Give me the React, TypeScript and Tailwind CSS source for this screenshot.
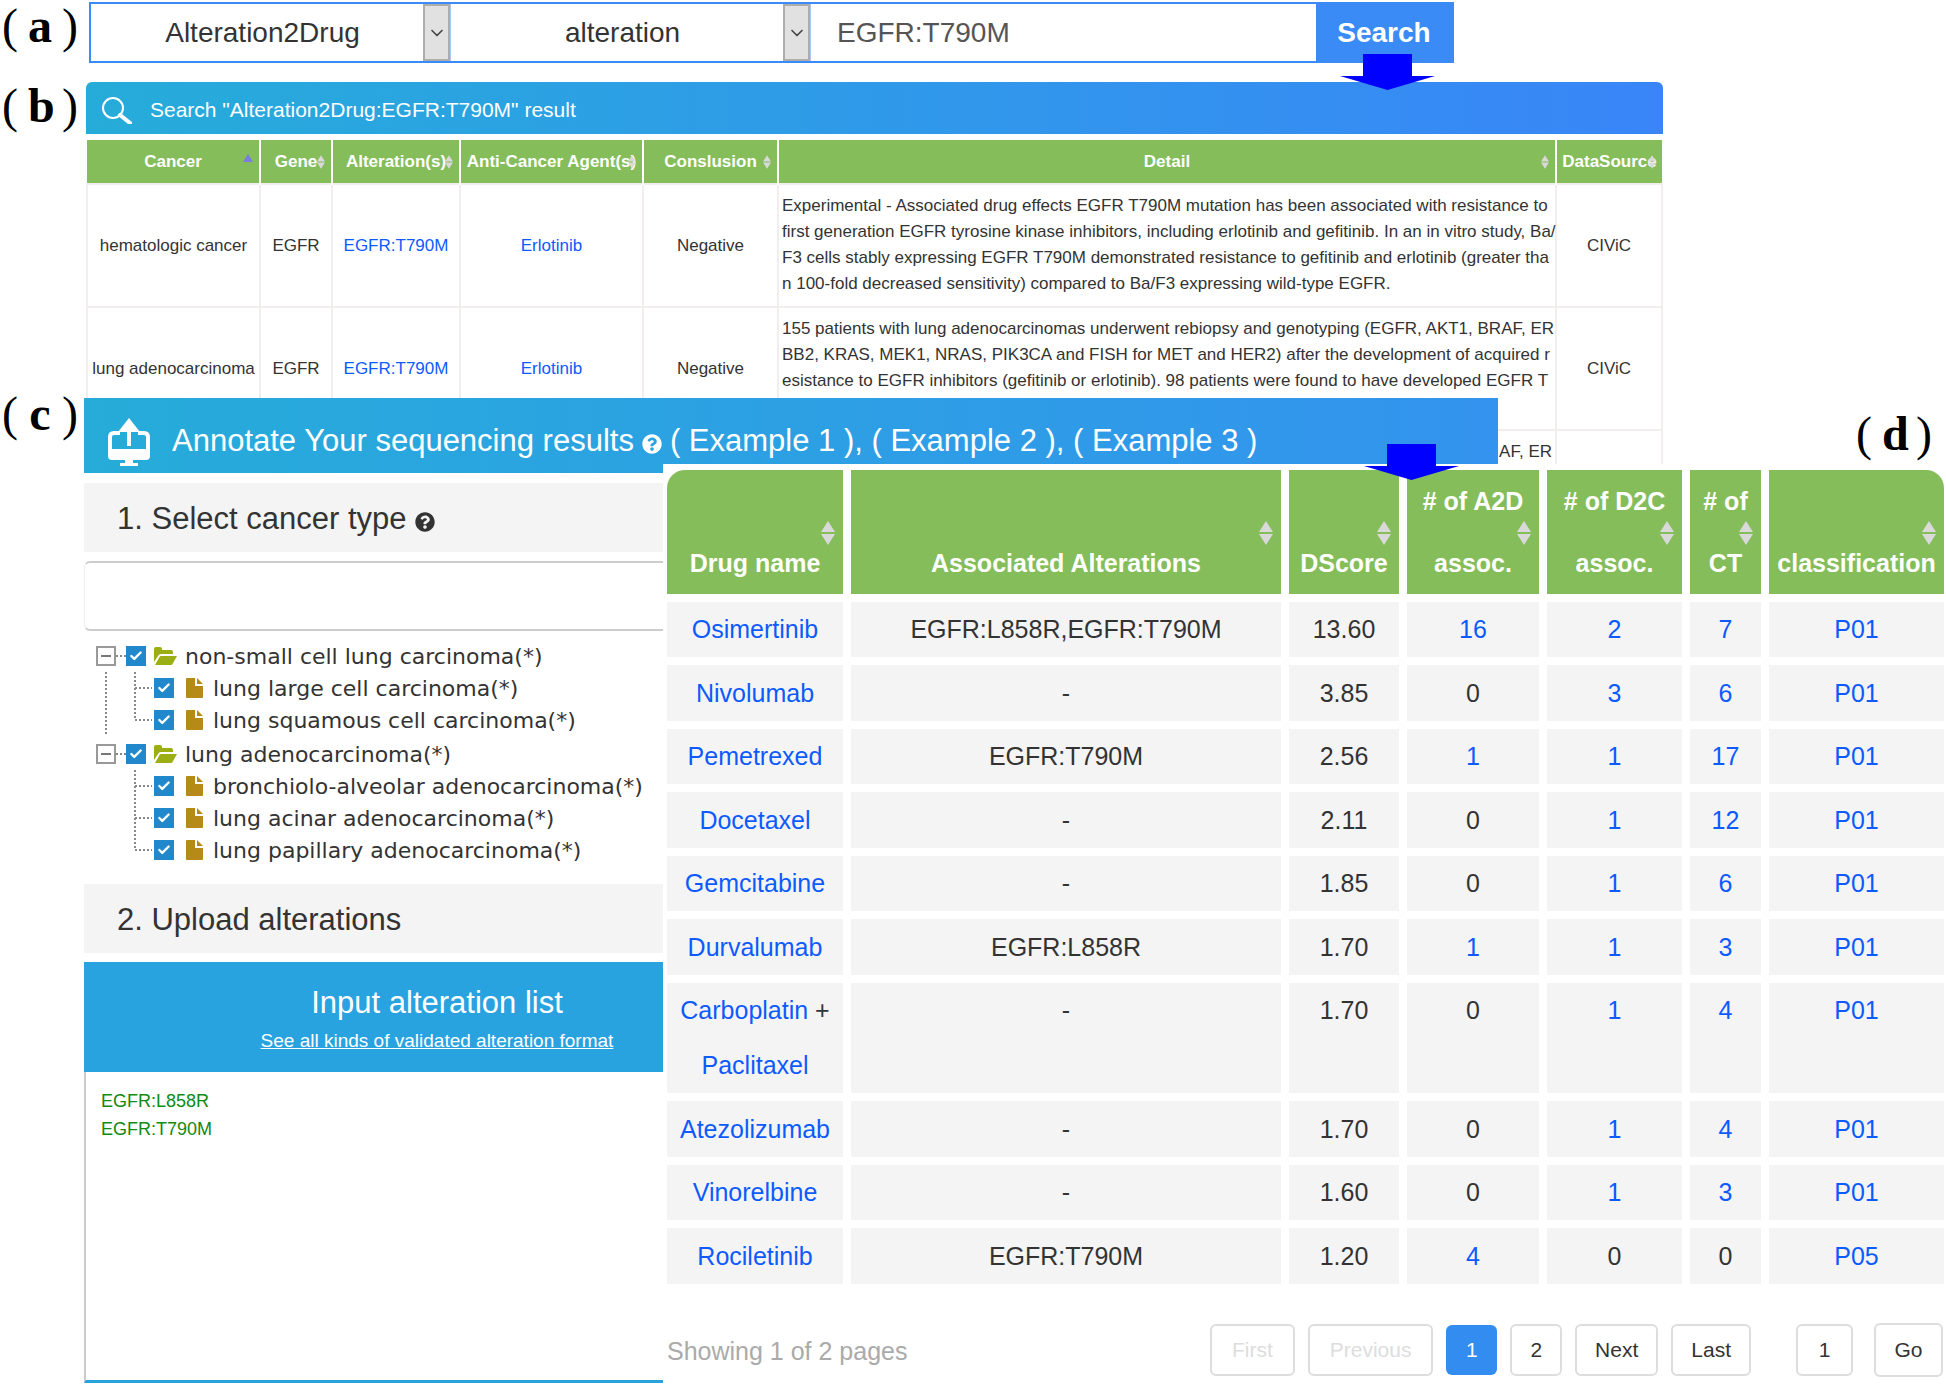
import { FaQuestionCircle } from "react-icons/fa";
import { Check, ChevronDown } from "lucide-react";

const evidence = [
  {
    cancer: "hematologic cancer",
    lines: [
      "Experimental - Associated drug effects EGFR T790M mutation has been associated with resistance to",
      "first generation EGFR tyrosine kinase inhibitors, including erlotinib and gefitinib. In an in vitro study, Ba/",
      "F3 cells stably expressing EGFR T790M demonstrated resistance to gefitinib and erlotinib (greater tha",
      "n 100-fold decreased sensitivity) compared to Ba/F3 expressing wild-type EGFR.",
    ],
  },
  {
    cancer: "lung adenocarcinoma",
    lines: [
      "155 patients with lung adenocarcinomas underwent rebiopsy and genotyping (EGFR, AKT1, BRAF, ER",
      "BB2, KRAS, MEK1, NRAS, PIK3CA and FISH for MET and HER2) after the development of acquired r",
      "esistance to EGFR inhibitors (gefitinib or erlotinib). 98 patients were found to have developed EGFR T",
    ],
  },
];

const evidenceColumns = [
  { title: "Cancer", width: "w-[173px]" },
  { title: "Gene", width: "w-[72px]" },
  { title: "Alteration(s)", width: "w-[128px]" },
  { title: "Anti-Cancer Agent(s)", width: "w-[183px]" },
  { title: "Conslusion", width: "w-[135px]" },
  { title: "Detail", width: "" },
  { title: "DataSource", width: "w-[106px]" },
];

const tree = [
  {
    name: "non-small cell lung carcinoma(*)",
    children: ["lung large cell carcinoma(*)", "lung squamous cell carcinoma(*)"],
  },
  {
    name: "lung adenocarcinoma(*)",
    children: [
      "bronchiolo-alveolar adenocarcinoma(*)",
      "lung acinar adenocarcinoma(*)",
      "lung papillary adenocarcinoma(*)",
    ],
  },
];

const drugColumns = [
  { title: "Drug name", width: "w-[176px]" },
  { title: "Associated Alterations", width: "" },
  { title: "DScore", width: "w-[110px]" },
  { title: "# of A2D assoc.", width: "w-[132px]" },
  { title: "# of D2C assoc.", width: "w-[135px]" },
  { title: "# of CT", width: "w-[71px]" },
  { title: "classification", width: "w-[175px]" },
];

const drugs = [
  { names: ["Osimertinib"], alt: "EGFR:L858R,EGFR:T790M", score: "13.60", a2d: 16, d2c: 2, ct: 7, cls: "P01" },
  { names: ["Nivolumab"], alt: "-", score: "3.85", a2d: 0, d2c: 3, ct: 6, cls: "P01" },
  { names: ["Pemetrexed"], alt: "EGFR:T790M", score: "2.56", a2d: 1, d2c: 1, ct: 17, cls: "P01" },
  { names: ["Docetaxel"], alt: "-", score: "2.11", a2d: 0, d2c: 1, ct: 12, cls: "P01" },
  { names: ["Gemcitabine"], alt: "-", score: "1.85", a2d: 0, d2c: 1, ct: 6, cls: "P01" },
  { names: ["Durvalumab"], alt: "EGFR:L858R", score: "1.70", a2d: 1, d2c: 1, ct: 3, cls: "P01" },
  { names: ["Carboplatin", "Paclitaxel"], alt: "-", score: "1.70", a2d: 0, d2c: 1, ct: 4, cls: "P01" },
  { names: ["Atezolizumab"], alt: "-", score: "1.70", a2d: 0, d2c: 1, ct: 4, cls: "P01" },
  { names: ["Vinorelbine"], alt: "-", score: "1.60", a2d: 0, d2c: 1, ct: 3, cls: "P01" },
  { names: ["Rociletinib"], alt: "EGFR:T790M", score: "1.20", a2d: 4, d2c: 0, ct: 0, cls: "P05" },
];

function PanelLabel({ letter }: { letter: string }) {
  return (
    <div className="flex w-[84px] shrink-0 gap-2.5 pl-0.5 font-['Liberation_Serif',serif] text-5xl leading-[48px] text-black">
      <span>(</span>
      <span className="w-6 text-center font-bold">{letter}</span>
      <span>)</span>
    </div>
  );
}

function DownArrow() {
  return (
    <svg className="h-9 w-[95px]" viewBox="0 0 95 36" fill="#0000ff">
      <path d="M23 0H72V22H95L47.5 36L0 22H23Z" />
    </svg>
  );
}

function SortIcon({ className }: { className: string }) {
  return (
    <svg className={className} viewBox="0 0 14 24" fill="#d9d9d9">
      <path d="M7 0L14 11H0Z" />
      <path d="M7 24L0 13H14Z" />
    </svg>
  );
}

function FolderIcon() {
  return (
    <svg className="mx-2 h-[18px] w-[23px] shrink-0" viewBox="0 0 23 18" fill="#9bae13">
      <path d="M0 15V2Q0 0 2 0H6Q8 0 8 2V3H17Q19 3 19 5V7H7Q5 7 4 9Z" />
      <path d="M1 18L5.5 10Q6 9 7 9H23L18.5 17Q18 18 17 18Z" />
    </svg>
  );
}

function FileIcon() {
  return (
    <svg className="ml-3 mr-2.5 h-5 w-[17px] shrink-0" viewBox="0 0 17 20" fill="#b58a16">
      <path d="M0 1Q0 0 1 0H9V8H17V19Q17 20 16 20H1Q0 20 0 19Z" />
      <path d="M11 0L17 6H11Z" />
    </svg>
  );
}

function Select({ label, value }: { label: string; value: string }) {
  return (
    <div className="relative h-full w-[360px] shrink-0 border-r border-[#a9c9f5]">
      <select
        aria-label={label}
        defaultValue={value}
        className="h-full w-full appearance-none bg-white pr-4 text-center text-[28px] text-[#333] outline-none"
      >
        <option>{value}</option>
      </select>
      <span className="pointer-events-none absolute inset-y-0 right-0 flex w-[27px] items-center justify-center border-2 border-[#adadad] bg-[#e1e1e1]">
        <ChevronDown className="size-5 text-[#444]" strokeWidth={2} />
      </span>
    </div>
  );
}

function SearchBar() {
  return (
    <section className="flex pt-0.5">
      <PanelLabel letter="a" />
      <form className="ml-[5px] mr-[492px] flex h-[61px] flex-1 border-2 border-[#3a8bf6]">
        <Select label="Search type" value="Alteration2Drug" />
        <Select label="Field" value="alteration" />
        <input
          aria-label="Keyword"
          defaultValue="EGFR:T790M"
          className="min-w-0 flex-1 px-[26px] text-[28px] text-[#555] outline-none"
        />
        <div className="relative w-[136px] shrink-0">
          <button type="button" className="h-full w-full bg-[#3a8bf6] text-[28px] font-bold text-white">
            Search
          </button>
          <div className="absolute left-6 top-[50px] z-10">
            <DownArrow />
          </div>
        </div>
      </form>
    </section>
  );
}

function ResultPanel() {
  return (
    <section className="mt-[19px] flex">
      <PanelLabel letter="b" />
      <div className="ml-0.5 mr-[283px] h-[382px] min-w-0 flex-1 overflow-hidden">
        <div className="flex h-[52px] items-center gap-[18px] rounded-t-md bg-linear-to-r from-[#26acd9] to-[#3985f8] pl-4 pt-1 text-[21px] text-white">
          <svg className="h-7 w-[30px]" viewBox="0 0 30 28" fill="none" stroke="currentColor">
            <circle cx="11" cy="12" r="10" strokeWidth="2" />
            <path d="M18 19L28 27" strokeWidth="4" strokeLinecap="round" />
          </svg>
          <h2>Search "Alteration2Drug:EGFR:T790M" result</h2>
        </div>
        <table className="mt-1.5 w-full table-fixed border-collapse whitespace-nowrap text-center text-[17px] leading-[26px] text-[#333]">
          <thead>
            <tr className="h-11 bg-[#84bd5a] text-white">
              {evidenceColumns.map((c) => (
                <th
                  key={c.title}
                  className={`relative border-r-2 border-white p-0 font-bold last:border-r-0 ${c.width}`}
                >
                  {c.title}
                  {c.title === "Cancer" ? (
                    <svg className="absolute right-1.5 top-3.5 h-2 w-2.5" viewBox="0 0 10 8" fill="#7b7be0">
                      <path d="M5 0L10 8H0Z" />
                    </svg>
                  ) : (
                    <SortIcon className="absolute right-1.5 top-3.5 h-4 w-2" />
                  )}
                </th>
              ))}
            </tr>
          </thead>
          <tbody>
            {evidence.map((row) => (
              <tr key={row.cancer} className="h-[123px] *:border-2 *:border-[#f3eeee] *:p-0">
                <td>{row.cancer}</td>
                <td>EGFR</td>
                <td>
                  <a href="#" className="text-[#0d5bff]">EGFR:T790M</a>
                </td>
                <td>
                  <a href="#" className="text-[#0d5bff]">Erlotinib</a>
                </td>
                <td>Negative</td>
                <td className="text-left align-top">
                  <div className="px-[3px] py-2">
                    {row.lines.map((line) => (
                      <p key={line}>{line}</p>
                    ))}
                  </div>
                </td>
                <td>CIViC</td>
              </tr>
            ))}
            {/* Next record, only its first line shows past the annotate banner */}
            <tr className="h-[123px] *:border-2 *:border-[#f3eeee] *:p-0">
              <td colSpan={5} />
              <td className="px-[3px] py-2 text-right align-top">
                <p className="px-[3px] py-2">AF, ER</p>
              </td>
              <td />
            </tr>
          </tbody>
        </table>
      </div>
    </section>
  );
}

function TreeCheckbox({ id }: { id: string }) {
  return (
    <span className="relative size-5 shrink-0">
      <input id={id} type="checkbox" defaultChecked className="block size-5 appearance-none bg-[#2189cb]" />
      <Check className="pointer-events-none absolute left-[3px] top-[3px] size-3.5 text-white" strokeWidth={4} />
    </span>
  );
}

function CancerTree() {
  return (
    <ul className="mt-[9px] flex flex-col gap-0.5 whitespace-nowrap pl-3 font-['DejaVu_Sans',sans-serif] text-[22px] text-[#333]">
      {tree.map((group, g) => (
        <li key={group.name}>
          <div className="flex h-8 items-center">
            <button
              type="button"
              aria-label="Collapse"
              className="flex size-5 items-center justify-center border-2 border-[#999]"
            >
              <span className="h-0.5 w-2.5 bg-[#777]" />
            </button>
            <span className="w-2.5 border-t-2 border-dotted border-[#888]" />
            <TreeCheckbox id={group.name} />
            <FolderIcon />
            <label htmlFor={group.name}>{group.name}</label>
          </div>
          <ul>
            {group.children.map((name, i) => (
              <li key={name} className="flex h-8 items-center">
                <svg
                  className="h-8 w-14 shrink-0"
                  viewBox="0 0 56 32"
                  fill="none"
                  stroke="#888"
                  strokeWidth="2"
                  strokeDasharray="2 2"
                >
                  {g === 0 && <path d="M10 0V32" />}
                  <path d={i === group.children.length - 1 ? "M39 0V16" : "M39 0V32"} />
                  <path d="M39 16H56" />
                </svg>
                <span className="ml-0.5 flex">
                  <TreeCheckbox id={name} />
                </span>
                <FileIcon />
                <label htmlFor={name}>{name}</label>
              </li>
            ))}
          </ul>
        </li>
      ))}
    </ul>
  );
}

function AnnotateForm() {
  return (
    <div className="flex w-[579px] shrink-0 flex-col overflow-hidden">
      <h3 className="mt-2.5 flex h-[69px] items-center gap-2 bg-[#f4f4f4] pl-[33px] pt-1 text-[31px] text-[#333]">
        <label htmlFor="cancer-type">1. Select cancer type</label>
        <FaQuestionCircle className="mt-1 size-5" />
      </h3>
      <input
        id="cancer-type"
        className="mt-[9px] h-[70px] shrink-0 rounded-l-md border-y-2 border-l border-[#ccc] border-l-[#eee] px-4 text-[21px] outline-none"
      />
      <CancerTree />
      <h3 className="mt-[18px] flex h-[69px] shrink-0 items-center bg-[#f4f4f4] pl-[33px] pt-1 text-[31px] text-[#333]">
        2. Upload alterations
      </h3>
      <div className="mt-[9px] flex h-[110px] w-[706px] shrink-0 flex-col items-center bg-[#29a2e0] pt-[23px] text-white">
        <label htmlFor="alterations" className="text-[31px] leading-9">
          Input alteration list
        </label>
        <a href="#" className="text-[19px] leading-10 underline">
          See all kinds of validated alteration format
        </a>
      </div>
      <textarea
        id="alterations"
        defaultValue={"EGFR:L858R\nEGFR:T790M"}
        className="h-[311px] shrink-0 resize-none border-b-[3px] border-l-2 border-b-[#29a2e0] border-l-[#ccc] px-[15px] pt-[15px] text-lg leading-7 text-[#108a10] outline-none"
      />
    </div>
  );
}

function Value({ children }: { children: string | number }) {
  return children === 0 ? (
    <>0</>
  ) : (
    <a href="#" className="text-[#0d5bff]">
      {children}
    </a>
  );
}

function DrugPanel() {
  const pageButton = "h-[52px] rounded-md border-2 border-[#ddd] bg-white";

  return (
    <div className="relative -mt-[9px] min-w-0 flex-1 bg-white">
      <div className="absolute -top-5 right-[487px] z-10">
        <DownArrow />
      </div>
      <table className="-mx-1 -mt-0.5 w-[calc(100%+10px)] table-fixed border-separate border-spacing-2 text-center text-[25px] text-[#333]">
        <thead>
          <tr className="leading-[62px] text-white">
            {drugColumns.map((c) => (
              <th
                key={c.title}
                className={`relative bg-[#84bd5a] p-0 px-1 align-bottom font-bold first:rounded-tl-[18px] last:rounded-tr-[18px] ${c.width}`}
              >
                {c.title}
                <SortIcon className="absolute right-2 top-[51px] h-6 w-3.5" />
              </th>
            ))}
          </tr>
        </thead>
        <tbody>
          {drugs.map((d) => (
            <tr key={d.names[0]} className="align-top leading-[55px] *:bg-[#f4f4f4] *:p-0 even:leading-[56px]">
              <td>
                {d.names.map((name, i) => (
                  <span key={name}>
                    {i > 0 && " + "}
                    <Value>{name}</Value>
                  </span>
                ))}
              </td>
              <td>{d.alt}</td>
              <td>{d.score}</td>
              <td>
                <Value>{d.a2d}</Value>
              </td>
              <td>
                <Value>{d.d2c}</Value>
              </td>
              <td>
                <Value>{d.ct}</Value>
              </td>
              <td>
                <Value>{d.cls}</Value>
              </td>
            </tr>
          ))}
        </tbody>
      </table>

      {/* Pagination */}
      <div className="mt-[31px] flex items-center gap-[13px] pl-1 pr-[3px] text-[21px] text-[#333]">
        <p className="mr-auto pt-1 text-[25px] text-[#aaa]">Showing 1 of 2 pages</p>
        <button type="button" disabled className={`${pageButton} px-5 text-[#ddd]`}>First</button>
        <button type="button" disabled className={`${pageButton} px-5 text-[#ddd]`}>Previous</button>
        <button type="button" className="h-[50px] w-[51px] rounded-md bg-[#338cf0] text-white">1</button>
        <button type="button" className={`${pageButton} px-[18px]`}>2</button>
        <button type="button" className={`${pageButton} px-[18px]`}>Next</button>
        <button type="button" className={`${pageButton} px-[18px]`}>Last</button>
        <input
          aria-label="Page"
          defaultValue="1"
          className="ml-8 h-[52px] w-[57px] rounded-md border-2 border-[#ddd] text-center outline-none"
        />
        <button type="button" className="ml-2 h-[54px] w-[69px] rounded-md border-2 border-[#ddd]">Go</button>
      </div>
    </div>
  );
}

function AnnotatePanel() {
  return (
    <section className="relative -mt-[66px] flex">
      <div className="-mt-2">
        <PanelLabel letter="c" />
      </div>
      <div className="min-w-0 flex-1">
        <div className="flex">
          <div className="flex h-[75px] flex-1 items-center whitespace-nowrap bg-linear-to-r from-[#26acd9] to-[#3393ee] pl-6 pt-3 text-[31px] text-white">
            <svg className="mr-[22px] h-12 w-[42px] shrink-0" viewBox="0 0 42 48" fill="none" stroke="currentColor">
              <path d="M12 15H6Q2 15 2 19V38M30 15H36Q40 15 40 19V38" strokeWidth="4" />
              <path d="M21 8V28" strokeWidth="4" />
              <path d="M21 0L32 14H10Z" fill="currentColor" stroke="none" />
              <path d="M0 31H42V38Q42 42 38 42H25V45H30V48H12V45H17V42H4Q0 42 0 38Z" fill="currentColor" stroke="none" />
            </svg>
            <h2>Annotate Your sequencing results</h2>
            <FaQuestionCircle className="mx-2 mt-1 size-5 shrink-0" />
            <p>
              ( <a href="#">Example 1</a> ), ( <a href="#">Example 2</a> ), ( <a href="#">Example 3</a> )
            </p>
          </div>
          <div className="flex w-[448px] justify-end pr-2 pt-3">
            <PanelLabel letter="d" />
          </div>
        </div>
        <div className="flex">
          <AnnotateForm />
          <DrugPanel />
        </div>
      </div>
    </section>
  );
}

export default function App() {
  return (
    <main className="min-h-screen bg-white font-['Liberation_Sans',Arial,sans-serif]">
      <SearchBar />
      <ResultPanel />
      <AnnotatePanel />
    </main>
  );
}
